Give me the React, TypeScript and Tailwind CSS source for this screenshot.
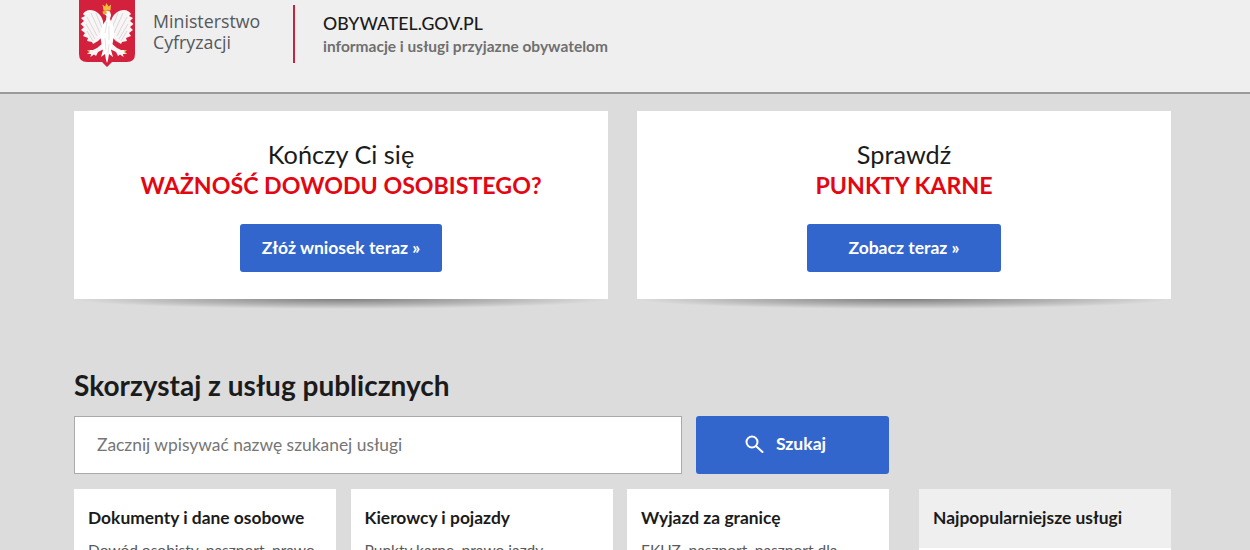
const heroCards = [
  { lead: 'Kończy Ci się', accent: 'WAŻNOŚĆ DOWODU OSOBISTEGO?', cta: 'Złóż wniosek teraz »', ctaWidth: 'w-[202px]' },
  { lead: 'Sprawdź', accent: 'PUNKTY KARNE', cta: 'Zobacz teraz »', ctaWidth: 'w-[194px]' },
];

const categories = [
  { title: 'Dokumenty i dane osobowe', text: 'Dowód osobisty, paszport, prawo' },
  { title: 'Kierowcy i pojazdy', text: 'Punkty karne, prawo jazdy,' },
  { title: 'Wyjazd za granicę', text: 'EKUZ, paszport, paszport dla' },
];

function Emblem() {
  const wing =
    'M24 21C22 14 17 10 11 10C8 10 5 12 4 14L6 16L2 18L5 21L1.500 24L5 27L2 30L6 33L4 36L9 38L8 41L13 42L14 44L19 41L22 38L25 33Z';
  const leg = 'M24 43L18 48L14 50L9 50L10.500 52L8 54L12 54L11.500 57L15 54.500L17 56L19 52L25 49Z';
  return (
    <svg viewBox="0 0 56 67" className="w-14 h-[67px] shrink-0">
      <path d="M0 0H56V54Q56 62 48 62H33L28 67L23 62H8Q0 62 0 54Z" fill="#d3203c" />
      <path d={wing} fill="#f7f5f5" />
      <path d={wing} fill="#f7f5f5" transform="matrix(-1 0 0 1 56 0)" />
      {/* wing feathers */}
      <path
        d="M8 17L18 36M7 24L16 39M8 31L14 41M12 13L21 33M17 13L23 28M48 17L38 36M49 24L40 39M48 31L42 41M44 13L35 33M39 13L33 28"
        stroke="#d6cfcf"
        strokeWidth="0.8"
        fill="none"
      />
      {/* legs and talons */}
      <path d={leg} fill="#f7f5f5" />
      <path d={leg} fill="#f7f5f5" transform="matrix(-1 0 0 1 56 0)" />
      <path d="M8 50H11L10 52.500L8 54L11 53ZM48 50H45L46 52.500L48 54L45 53Z" fill="#eab547" />
      {/* body, neck and head */}
      <path
        d="M24 13L27 10.500L31 11.500L32 15L31 19L34 25L35 34L34 41L33 47L32 50L34 57L30 54L29 60L28 63L27 60L26 54L22 57L24 50L23 47L22 41L21 34L23 26L27 20L27.500 16L26 14.500Z"
        fill="#ffffff"
      />
      <path d="M28 22L26 33M30 26L30 40M26 38L27 50M30 44L29 54" stroke="#dcd6d6" strokeWidth="0.7" fill="none" />
      {/* beak and crown */}
      <path d="M23.500 11.500L27 10L28 13.500L25.500 14.500L24 14Z" fill="#e9ad35" />
      <path d="M23.500 4.500L26 6.500L27.500 3L29.500 6.500L32 4.500L31.500 10.500L24.500 10.500Z" fill="#f2bc3c" />
    </svg>
  );
}

export default function App() {
  return (
    <div className="h-[550px] overflow-hidden bg-[#dcdcdc] font-['Lato','Liberation_Sans',sans-serif]">
      <header className="h-[94px] bg-[#efefef] border-b-2 border-[#9b9b9b] pl-[79px] flex items-start">
        <Emblem />
        <div className="ml-[18px] mt-[11px] w-[140px] font-['Open_Sans',sans-serif] text-[17.8px] leading-[21px] text-[#55585c]">
          Ministerstwo
          <br />
          Cyfryzacji
        </div>
        <div className="mt-[5px] h-[58px] w-0.5 bg-[#c4223f]" />
        <div className="ml-[28px] mt-[13px]">
          <div className="text-[17.7px] leading-[22px] font-medium text-[#1b1b1b]">OBYWATEL.GOV.PL</div>
          <div className="mt-[2px] text-[15.5px] leading-[18px] font-bold text-[#6f6f6f]">
            informacje i usługi przyjazne obywatelom
          </div>
        </div>
      </header>

      <main className="w-[1097px] ml-[74px]">
        <section className="mt-[17px] grid grid-cols-[534px_534px] gap-[29px]">
          {heroCards.map((card) => (
            <div key={card.lead}>
              <div className="h-[188px] bg-white pt-[27px] flex flex-col items-center">
                <div className="text-[25.3px] leading-[32px] text-[#1b1b1b]">{card.lead}</div>
                <div className="mt-[1px] text-[23.2px] leading-[28px] font-bold text-[#e30613]">{card.accent}</div>
                <button
                  className={`mt-[25px] h-[48px] rounded-[3px] bg-[#3366cc] text-[17.5px] font-bold text-white ${card.ctaWidth}`}
                >
                  {card.cta}
                </button>
              </div>
              <div className="h-[10px] bg-[radial-gradient(ellipse_50%_100%_at_50%_0%,rgba(0,0,0,0.42),rgba(0,0,0,0.18)_60%,transparent_100%)]" />
            </div>
          ))}
        </section>

        <h2 className="mt-[59px] text-[28px] leading-[34px] font-bold text-[#1b1b1b]">
          Skorzystaj z usług publicznych
        </h2>

        <div className="mt-[14px] flex gap-[14px]">
          <div className="w-[608px] h-[58px] bg-white border border-[#aaaaaa] pl-[22px] flex items-center text-[17.4px] text-[#757575]">
            Zacznij wpisywać nazwę szukanej usługi
          </div>
          <button className="w-[193px] h-[58px] rounded-[3px] bg-[#3366cc] text-white text-[17.6px] font-bold flex items-center justify-center gap-[12px] pr-[14px] pb-[2px]">
            <svg viewBox="0 0 19 19" className="w-[19px] h-[19px]" fill="none" stroke="currentColor" strokeWidth="2" strokeLinecap="round">
              <circle cx="7" cy="7" r="5.500" />
              <path d="M11.200 11.200L17.500 17" />
            </svg>
            Szukaj
          </button>
        </div>

        <div className="mt-[15px] flex">
          <div className="flex gap-[14.5px]">
            {categories.map((cat) => (
              <div key={cat.title} className="w-[262px] h-[100px] bg-white px-[14px] pt-[17px]">
                <div className="text-[17.4px] leading-[24px] font-bold text-[#1b1b1b]">{cat.title}</div>
                <div className="mt-[10px] text-[15.5px] leading-[20px] text-[#5a5a5a]">{cat.text}</div>
              </div>
            ))}
          </div>
          <aside className="ml-[30px] w-[252px]">
            <div className="h-[59px] bg-[#efefef] px-[14px] pt-[17px] text-[17.4px] leading-[24px] font-bold text-[#1b1b1b]">
              Najpopularniejsze usługi
            </div>
            <div className="h-[41px] bg-white" />
          </aside>
        </div>
      </main>
    </div>
  );
}
